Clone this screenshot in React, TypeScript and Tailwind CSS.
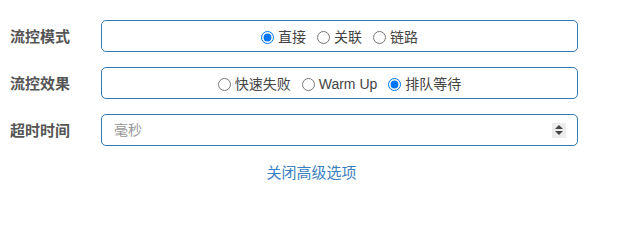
import { useState } from "react";

type Opt = { value: string; label: string };

const RadioGroup = ({ name, options, value, onChange }: { name: string; options: Opt[]; value: string; onChange: (v: string) => void }) => (
	<div className="flex-1 h-[32px] border border-[#337ab7] rounded-[5px] flex items-center justify-center gap-[11px] text-[14px] text-[#444] pt-[2px]">
		{options.map((o) => (
			<label key={o.value} className="flex items-center gap-[4px] cursor-pointer">
				<input
					type="radio"
					name={name}
					checked={value === o.value}
					onChange={() => onChange(o.value)}
					className="m-0 w-[13px] h-[13px]"
				/>
				<span>{o.label}</span>
			</label>
		))}
	</div>
);

const Row = ({ label, children }: { label: string; children: React.ReactNode }) => (
	<div className="flex items-center">
		<div className="w-[91px] text-[15px] font-bold text-[#555] pt-[3px]">{label}</div>
		{children}
	</div>
);

export default function App() {
	const [mode, setMode] = useState("direct");
	const [effect, setEffect] = useState("queue");

	return (
		<div className="w-[623px] h-[209px] bg-white pt-[20px] font-['Liberation_Sans','Noto_Sans_CJK_SC',sans-serif]">
			<div className="flex flex-col gap-[15px] pl-[10px] pr-[45px]">
				<Row label="流控模式">
					<RadioGroup
						name="mode"
						value={mode}
						onChange={setMode}
						options={[
							{ value: "direct", label: "直接" },
							{ value: "relate", label: "关联" },
							{ value: "chain", label: "链路" },
						]}
					/>
				</Row>
				<Row label="流控效果">
					<RadioGroup
						name="effect"
						value={effect}
						onChange={setEffect}
						options={[
							{ value: "fail", label: "快速失败" },
							{ value: "warm", label: "Warm Up" },
							{ value: "queue", label: "排队等待" },
						]}
					/>
				</Row>
				<Row label="超时时间">
					<div className="flex-1 h-[32px] border border-[#337ab7] rounded-[5px] flex items-center pl-[12px] pr-[11px]">
						<span className="flex-1 text-[14px] text-[#999]">毫秒</span>
						<div className="w-[14px] h-[15px] bg-[#ececec] flex flex-col items-center justify-center gap-[2px]">
							<svg width="8" height="4" viewBox="0 0 8 4"><path d="M4 0L8 4H0Z" fill="#444" /></svg>
							<svg width="8" height="4" viewBox="0 0 8 4"><path d="M0 0H8L4 4Z" fill="#444" /></svg>
						</div>
					</div>
				</Row>
			</div>
			<div className="text-center mt-[16px] text-[15px] text-[#3a7fc1]">
				<a className="cursor-pointer">关闭高级选项</a>
			</div>
		</div>
	);
}
